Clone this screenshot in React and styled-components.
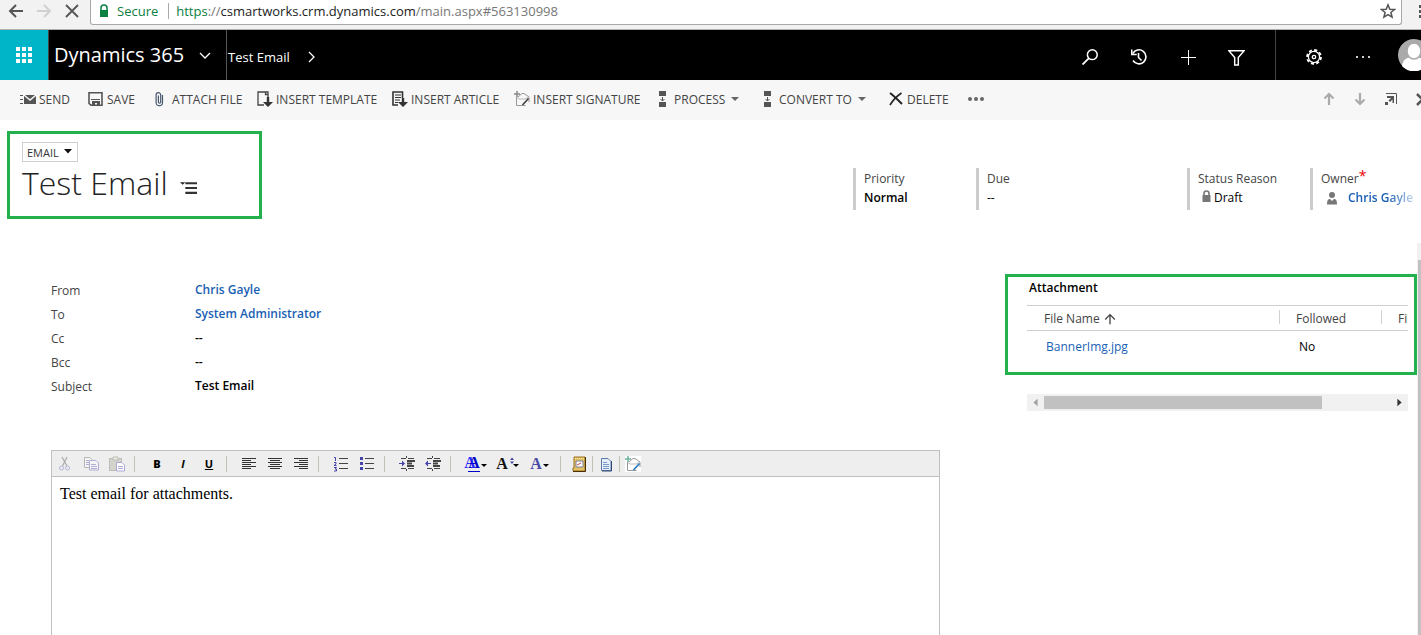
import { useState } from "react";
import styled, { createGlobalStyle, css } from "styled-components";

const commands = [
    { label: "SEND", icon: "send", width: 68 },
    { label: "SAVE", icon: "save", width: 65 },
    { label: "ATTACH FILE", icon: "clip", width: 104 },
    { label: "INSERT TEMPLATE", icon: "template", width: 135 },
    { label: "INSERT ARTICLE", icon: "article", width: 122 },
    { label: "INSERT SIGNATURE", icon: "signature", width: 141 },
    { label: "PROCESS", icon: "process", width: 105, menu: true },
    { label: "CONVERT TO", icon: "process", width: 128, menu: true },
    { label: "DELETE", icon: "remove", width: 80 },
];

const details = [
    { label: "From", value: "Chris Gayle", link: true },
    { label: "To", value: "System Administrator", link: true },
    { label: "Cc", value: "--" },
    { label: "Bcc", value: "--" },
    { label: "Subject", value: "Test Email" },
];

const Icon = ({ name, size = 16 }) => (
    <svg width={size} height={size} viewBox="0 0 16 16" fill="none" aria-hidden="true">
        {icons[name]}
    </svg>
);

const envelopePen = (pen, plus) => (
    <>
        <path d="M2.500 6v8.500h9M4 6l4-3.500h2L15 6v5" stroke="#999" />
        <path d="M3 6.500l2 1.500h6l3-1.500" stroke="#bbb" />
        <path d="M14.500 7.500L8.500 14" stroke={pen} strokeWidth="1.700" />
        <path d="M3 0v6M0 3h6" stroke={plus} strokeWidth="1.500" />
    </>
);

const icons = {
    back: <path d="M15 8H2M8 2L2 8l6 6" stroke="#555" strokeWidth="2" />,
    forward: <path d="M1 8h13M8 2l6 6-6 6" stroke="#d0d0d0" strokeWidth="2" />,
    stop: <path d="M2 2l12 12M14 2L2 14" stroke="#555" strokeWidth="1.800" />,
    lock: (
        <>
            <path d="M5 7V5a3 3 0 0 1 6 0v2" stroke="#0b8043" strokeWidth="1.500" />
            <path d="M4 7h8v7H4z" fill="#0b8043" />
        </>
    ),
    star: <path d="M8 1.800l1.800 4.400 4.700.3-3.600 3 1.200 4.700L8 11.600l-4.100 2.600 1.200-4.700-3.600-3 4.700-.3z" stroke="#555" strokeWidth="1.500" />,
    waffle: <path d="M0 0h4v4H0zM6 0h4v4H6zM12 0h4v4h-4zM0 6h4v4H0zM6 6h4v4H6zM12 6h4v4h-4zM0 12h4v4H0zM6 12h4v4H6zM12 12h4v4h-4z" fill="#fff" />,
    down: <path d="M3 7l5 5 5-5" stroke="#fff" strokeWidth="1.300" />,
    right: <path d="M5 3l5 5-5 5" stroke="#fff" strokeWidth="1.300" />,
    search: (
        <>
            <circle cx="10.300" cy="5.700" r="4.900" stroke="#fff" strokeWidth="1.500" />
            <path d="M7 9.200L.5 15.500" stroke="#fff" strokeWidth="1.800" />
        </>
    ),
    history: (
        <>
            <path d="M1.800 4.500A7 7 0 1 1 2 11.500" stroke="#fff" strokeWidth="1.600" />
            <path d="M.7 .5v5h5M7.500 4v4.500l3 3" stroke="#fff" strokeWidth="1.600" />
        </>
    ),
    plus: <path d="M8.500 1v15M1 8.500h15" stroke="#fff" />,
    filter: <path d="M.8 1.600h14.400L9.700 8v7H6.300V8z" stroke="#fff" strokeWidth="1.400" />,
    gear: (
        <>
            <circle cx="8" cy="8" r="7" stroke="#fff" strokeWidth="1.800" strokeDasharray="3.100 2.400" />
            <circle cx="8" cy="8" r="5.600" stroke="#fff" strokeWidth="1.300" />
            <circle cx="8" cy="8" r="1.700" stroke="#fff" strokeWidth="1.300" />
        </>
    ),
    more: <path d="M1 7h2v2H1zM7 7h2v2H7zM13 7h2v2h-2z" fill="#ccc" />,
    dots: (
        <g fill="#666">
            <circle cx="2" cy="8" r="2" />
            <circle cx="8" cy="8" r="2" />
            <circle cx="14" cy="8" r="2" />
        </g>
    ),
    send: (
        <>
            <path d="M0 4.500h3M0 8.500h3M0 12.500h3" stroke="#555" />
            <path d="M4 4h12v9H4z" fill="#555" />
            <path d="M4 4l6 5 6-5" stroke="#f7f7f7" strokeWidth="1.400" />
        </>
    ),
    save: (
        <>
            <path d="M1 1.800h13v12.400H3L1 12.500z" stroke="#555" strokeWidth="1.600" />
            <path d="M3 8.500h9" stroke="#555" />
            <path d="M4 10h8v5H9v-3H7v3H4z" fill="#555" />
        </>
    ),
    clip: <path d="M9.500 4v7.500a3.200 3.200 0 0 1-6.400 0V4a2.300 2.300 0 0 1 4.600 0v7a1 1 0 0 1-2.300 0V4.500" stroke="#4a5870" strokeWidth="1.200" />,
    template: (
        <>
            <path d="M7 14H1V1h10v5M8.500 1v2.500H11" stroke="#444" strokeWidth="1.300" />
            <path d="M9.800 6h2.400v5H16l-5 5-5-5h3.800z" fill="#333" />
        </>
    ),
    article: (
        <>
            <path d="M6 14H1V1h9.500v6" stroke="#333" strokeWidth="1.600" />
            <path d="M3 4h6M3 6.500h6M3 9h5M3 11.500h3" stroke="#333" />
            <path d="M9.800 7h2.400v4H16l-5 5-5-5h3.800z" fill="#333" />
        </>
    ),
    signature: envelopePen("#444", "#888"),
    process: (
        <>
            <path d="M4 0h7v5H4zM4 11h7v5H4z" fill="#555" />
            <path d="M7.500 6v4M5.500 8l2 2 2-2" stroke="#555" />
        </>
    ),
    remove: (
        <>
            <path d="M2 2c4 3 8 7 12 11" stroke="#222" strokeWidth="2" />
            <path d="M13.500 2C9 5 5 9 2 14" stroke="#222" strokeWidth="1.600" />
        </>
    ),
    caret: <path d="M3 6h8l-4 4z" fill="#666" />,
    up: <path d="M8 14V3M3.500 7.500L8 3l4.500 4.500" stroke="#aaa" strokeWidth="2.200" />,
    downArrow: <path d="M8 2v11M3.500 8.500L8 13l4.500-4.500" stroke="#aaa" strokeWidth="2.200" />,
    popout: (
        <>
            <path d="M3 2.500h10.500V13" stroke="#555" />
            <path d="M4 5h7v7H9.500V8.500L7 11 5.500 9.500 8 7H4zM2 11h3v3H2z" fill="#555" />
        </>
    ),
    close: <path d="M1 3l11 11M12 3L1 14" stroke="#555" strokeWidth="2.500" />,
    formMenu: (
        <>
            <path d="M0 3h5L2.500 5.500z" fill="#222" />
            <path d="M5 4h11M5 8.500h11M5 13h11" stroke="#333" strokeWidth="2" />
        </>
    ),
    padlock: (
        <>
            <path d="M6 5V3.500a2.500 2.500 0 0 1 5 0V5" stroke="#777" strokeWidth="1.600" />
            <path d="M4.500 5h8v7h-8z" fill="#777" />
        </>
    ),
    person: (
        <>
            <circle cx="8" cy="5" r="3" fill="#777" />
            <path d="M3 14.500c0-4 1-5.500 3-5.500l2 2 2-2c2 0 3 1.500 3 5.500z" fill="#777" />
        </>
    ),
    sortUp: <path d="M8 14V3M2.500 8.500L8 3l5.500 5.500" stroke="#444" strokeWidth="1.500" />,
    scrollLeft: <path d="M10 4.500v7L6 8z" fill="#a3a3a3" />,
    scrollRight: <path d="M6 4.500v7L10 8z" fill="#333" />,
    cut: (
        <>
            <path d="M5 1l5 9M10 1L5.500 10" stroke="#aaa" strokeWidth="1.200" />
            <circle cx="4.500" cy="12" r="2" stroke="#b5b5dc" />
            <circle cx="10.500" cy="12" r="2" stroke="#b5b5dc" />
        </>
    ),
    copy: (
        <>
            <path d="M1.500 1.500H7l2 2v8H1.500z" stroke="#b5b5b5" fill="#f5f5f5" />
            <path d="M6.500 4.500H13l2.500 2.500v7h-9z" stroke="#b0b0d5" fill="#f5f5f5" />
            <path d="M3 4.500h3M3 6.500h3M3 8.500h3M8 8.500h5M8 10.500h6M8 12.500h6" stroke="#b0b0d5" />
        </>
    ),
    paste: (
        <>
            <path d="M.5 2.500h12v12H.5z" stroke="#bbb" fill="#d3d3cc" />
            <path d="M4 1h5v3H4z" fill="#eeeee0" stroke="#bbb" />
            <path d="M7.500 6.500H13l2.500 2.500v6h-8z" stroke="#aaaad5" fill="#fff" />
            <path d="M9 10.500h5M9 12.500h5" stroke="#aaaad5" />
        </>
    ),
    alignLeft: <path d="M1 2.500h14M1 4.500h9M1 6.500h14M1 8.500h9M1 10.500h14M1 12.500h9" stroke="#333" />,
    alignCenter: <path d="M1 2.500h14M3 4.500h10M1 6.500h14M3 8.500h10M1 10.500h14M3 12.500h10" stroke="#333" />,
    alignRight: <path d="M1 2.500h14M6 4.500h9M1 6.500h14M6 8.500h9M1 10.500h14M6 12.500h9" stroke="#333" />,
    numbers: (
        <>
            <path d="M6 2.500h9M6 7.500h9M6 12.500h9" stroke="#444" />
            <path d="M1 1.500h1.500V5M1 6.500h2v1.500L1 9.500h2.500M1 11.500h2.500L2 13h1.500v2H1" stroke="#44a" />
        </>
    ),
    bullets: (
        <>
            <path d="M6 2.500h9M6 7.500h9M6 12.500h9" stroke="#444" />
            <path d="M1 1h3v3H1zM1 6h3v3H1zM1 11h3v3H1z" fill="#44a" />
        </>
    ),
    indent: (
        <>
            <path d="M2 2.500h5M9 2.500h6M2 12.500h5M9 12.500h6M7.500 0v2M7.500 13v2" stroke="#444" />
            <path d="M8 5h8M8 7.500h5M8 10h7" stroke="#444" strokeWidth="2" />
            <path d="M0 7h3V4.500L6 7.500l-3 3V8H0z" fill="#44a" />
        </>
    ),
    outdent: (
        <>
            <path d="M2 2.500h5M9 2.500h6M2 12.500h5M9 12.500h6M7.500 0v2M7.500 13v2" stroke="#444" />
            <path d="M8 5h8M8 7.500h5M8 10h7" stroke="#444" strokeWidth="2" />
            <path d="M6 7H3V4.500L0 7.500l3 3V8h3z" fill="#44a" />
        </>
    ),
    pickerCaret: <path d="M3 5h8L7 9.500z" fill="#111" />,
    smallCaret: <path d="M5 8h6l-3 3z" fill="#000" />,
    sizer: <path d="M6 4h4L8 1.500zM6 5.500h4L8 8z" fill="#44a" />,
    book: (
        <>
            <path d="M3 1h11v14H2v-3h1z" fill="#e3c065" stroke="#9a7020" />
            <path d="M14.500 1v14.500H2" stroke="#4a3000" />
            <path d="M5 5h7v6H5z" fill="#fff" stroke="#77829a" />
            <path d="M6 9l4-2" stroke="#c44" />
            <path d="M4 2.500h9" stroke="#fff3b0" strokeDasharray="1 1" />
        </>
    ),
    page: (
        <>
            <path d="M3.500 2.500H10l3 3v9H3.500z" fill="#e6eefb" stroke="#5a78a8" />
            <path d="M5 6.500h4M5 8.500h6M5 10.500h6M5 12.500h6" stroke="#7a98c8" />
            <path d="M13.500 5v10H4" stroke="#334a70" />
        </>
    ),
    signatureColor: (
        <>
            <path d="M0 0h16v16H0z" fill="#fff" />
            {envelopePen("#2a78c0", "#6fb59a")}
        </>
    ),
};

const BrowserBar = () => (
    <Chrome>
        <ChromeButton aria-label="Back"><Icon name="back" /></ChromeButton>
        <ChromeButton aria-label="Forward"><Icon name="forward" /></ChromeButton>
        <ChromeButton aria-label="Stop"><Icon name="stop" /></ChromeButton>
        <AddressBar>
            <Icon name="lock" />
            <Secure>Secure</Secure>
            <Url role="textbox" aria-label="Address">
                <em>https</em>://<strong>csmartworks.crm.dynamics.com</strong>/main.aspx#563130998
            </Url>
            <Icon name="star" />
        </AddressBar>
        <BrowserMenu aria-label="Browser menu"><i /><i /><i /></BrowserMenu>
    </Chrome>
);

const TopNav = () => (
    <Nav>
        <Waffle aria-label="Apps"><Icon name="waffle" /></Waffle>
        <Brand>
            Dynamics 365
            <Icon name="down" />
        </Brand>
        <Crumb href="#record">
            Test Email
            <Icon name="right" />
        </Crumb>
        <NavTools>
            <NavButton aria-label="Search"><Icon name="search" /></NavButton>
            <NavButton aria-label="Recent"><Icon name="history" /></NavButton>
            <NavButton aria-label="New"><Icon name="plus" /></NavButton>
            <NavButton aria-label="Advanced find"><Icon name="filter" size={17} /></NavButton>
        </NavTools>
        <NavSettings>
            <NavButton aria-label="Settings"><Icon name="gear" /></NavButton>
            <NavButton aria-label="More"><Icon name="more" /></NavButton>
        </NavSettings>
        <Avatar>
            <svg width="32" height="32" viewBox="0 0 32 32" aria-hidden="true">
                <circle cx="16" cy="16" r="16" fill="#aaa" />
                <path d="M4 27c1-7 5-9 12-9s11 2 12 9a16 16 0 0 1-24 0z" fill="#fff" />
                <ellipse cx="16" cy="12" rx="7" ry="8" fill="#fff" stroke="#aaa" strokeWidth="1.500" />
            </svg>
        </Avatar>
    </Nav>
);

const CommandBar = () => (
    <Commands>
        {commands.map(({ label, icon, width, menu }) => (
            <Command key={label} $width={width}>
                <Icon name={icon} />
                <span>{label}</span>
                {menu && <Icon name="caret" />}
            </Command>
        ))}
        <Command aria-label="More commands"><Icon name="dots" /></Command>
        <RecordTools>
            <RecordButton aria-label="Previous record"><Icon name="up" /></RecordButton>
            <RecordButton aria-label="Next record"><Icon name="downArrow" /></RecordButton>
            <RecordButton aria-label="Pop out"><Icon name="popout" /></RecordButton>
            <CloseButton aria-label="Close"><Icon name="close" /></CloseButton>
        </RecordTools>
    </Commands>
);

const FormHeader = () => (
    <HeaderRow>
        <TitleBox>
            <FormPicker>
                <select aria-label="Form">
                    <option>EMAIL</option>
                </select>
                <Icon name="pickerCaret" />
            </FormPicker>
            <TitleLine>
                <Title>Test Email</Title>
                <SectionsButton aria-label="Form sections"><Icon name="formMenu" size={17} /></SectionsButton>
            </TitleLine>
        </TitleBox>
        <HeaderFields>
            <Field $width={123}>
                <dt>Priority</dt>
                <dd><b>Normal</b></dd>
            </Field>
            <Field $width={211}>
                <dt>Due</dt>
                <dd>--</dd>
            </Field>
            <Field $width={123}>
                <dt>Status Reason</dt>
                <Locked><Icon name="padlock" />Draft</Locked>
            </Field>
            <Field $width={111}>
                <dt>Owner<Required>*</Required></dt>
                <Owner>
                    <Icon name="person" />
                    <a href="#owner">Chris Gayle</a>
                </Owner>
            </Field>
        </HeaderFields>
    </HeaderRow>
);

const Attachments = () => (
    <Side>
        <AttachmentBox>
            <h2>Attachment</h2>
            <TableClip>
                <Table>
                    <thead>
                        <tr>
                            <th>File Name <Icon name="sortUp" size={14} /></th>
                            <th>Followed</th>
                            <th>File Size</th>
                        </tr>
                    </thead>
                    <tbody>
                        <tr>
                            <td><a href="#file">BannerImg.jpg</a></td>
                            <td>No</td>
                            <td />
                        </tr>
                    </tbody>
                </Table>
            </TableClip>
        </AttachmentBox>
        <Scroller>
            <PlainButton aria-label="Scroll left"><Icon name="scrollLeft" size={17} /></PlainButton>
            <ScrollTrack><ScrollThumb /></ScrollTrack>
            <PlainButton aria-label="Scroll right"><Icon name="scrollRight" size={17} /></PlainButton>
        </Scroller>
    </Side>
);

const Tool = ({ icon, label }) => (
    <ToolButton aria-label={label}><Icon name={icon} /></ToolButton>
);

const Editor = () => {
    const [text, setText] = useState("Test email for attachments.");

    return (
        <EditorFrame>
            <EditorBar>
                <Tool icon="cut" label="Cut" />
                <Tool icon="copy" label="Copy" />
                <Tool icon="paste" label="Paste" />
                <Divider />
                <ToolButton><b>B</b></ToolButton>
                <ToolButton><i>I</i></ToolButton>
                <ToolButton><u>U</u></ToolButton>
                <Divider />
                <Tool icon="alignLeft" label="Align left" />
                <Tool icon="alignCenter" label="Align center" />
                <Tool icon="alignRight" label="Align right" />
                <Divider />
                <Tool icon="numbers" label="Numbered list" />
                <Tool icon="bullets" label="Bulleted list" />
                <Divider />
                <Tool icon="indent" label="Increase indent" />
                <Tool icon="outdent" label="Decrease indent" />
                <Divider />
                <FontButton $color="#0000c8" $double aria-label="Font">
                    <span>A</span>
                    <Icon name="smallCaret" />
                </FontButton>
                <FontButton $color="#111" aria-label="Font size">
                    <span>A</span>
                    <Icon name="sizer" />
                    <Icon name="smallCaret" />
                </FontButton>
                <FontButton $color="#4a4aa5" aria-label="Font color">
                    <span>A</span>
                    <Icon name="smallCaret" />
                </FontButton>
                <Divider $short />
                <Tool icon="book" label="Insert template" />
                <Divider $tight />
                <Tool icon="page" label="Insert article" />
                <Divider $tight />
                <Tool icon="signatureColor" label="Insert signature" />
            </EditorBar>
            <Message
                aria-label="Message"
                spellCheck={false}
                value={text}
                onChange={(e) => setText(e.target.value)}
            />
        </EditorFrame>
    );
};

const App = () => (
    <Page>
        <GlobalStyle />
        <BrowserBar />
        <TopNav />
        <CommandBar />
        <FormHeader />
        <Body>
            <Main>
                <Details>
                    {details.map(({ label, value, link }) => (
                        <DetailRow key={label}>
                            <dt>{label}</dt>
                            <dd>{link ? <a href="#contact">{value}</a> : value}</dd>
                        </DetailRow>
                    ))}
                </Details>
                <Editor />
            </Main>
            <Attachments />
            <PageScroll><div /></PageScroll>
        </Body>
    </Page>
);

const GlobalStyle = createGlobalStyle`
    * {
        box-sizing: border-box;
    }
    body {
        margin: 0;
        background: #fff;
        color: #000;
        font-family: "Open Sans", "Noto Sans", sans-serif;
        font-size: 12px;
    }
    button {
        background: none;
        border: 0;
        padding: 0;
        font: inherit;
        color: inherit;
    }
    a {
        color: #1a5fb4;
        text-decoration: none;
    }
    dl, dd, h1, h2 {
        margin: 0;
    }
    svg {
        display: block;
        flex: none;
    }
`;

const highlight = css`
    border: 3px solid #22b14c;
`;

const Page = styled.div`
    display: flex;
    flex-direction: column;
    height: 100vh;
    overflow: hidden;
`;

const PlainButton = styled.button`
    display: flex;
    align-items: center;
    justify-content: center;
`;

const Chrome = styled.div`
    display: flex;
    align-items: flex-start;
    flex: none;
    height: 30px;
    padding-left: 2px;
    background: #f2f2f2;
    border-bottom: 1px solid #b0b0b0;
`;
const ChromeButton = styled(PlainButton)`
    width: 28px;
    height: 22px;
`;
const AddressBar = styled.div`
    display: flex;
    align-items: center;
    flex: 1;
    height: 25px;
    margin-left: 4px;
    padding: 0 5px 2px;
    background: #fff;
    border: 1px solid #a8a8a8;
    border-top: 0;
    border-radius: 0 0 3px 3px;
    font-size: 13px;
`;
const Secure = styled.span`
    margin-left: 5px;
    padding-right: 10px;
    border-right: 1px solid #aaa;
    color: #0b8043;
    line-height: 16px;
`;
const Url = styled.div`
    flex: 1;
    padding-left: 7px;
    color: #777;
    white-space: nowrap;

    em {
        font-style: normal;
        color: #0b8043;
    }
    strong {
        font-weight: 400;
        color: #222;
    }
`;
const BrowserMenu = styled.button`
    display: flex;
    flex-direction: column;
    gap: 2px;
    width: 19px;
    padding: 5px 0 0 17px;

    i {
        width: 3px;
        height: 3px;
        background: #555;
    }
`;

const Nav = styled.nav`
    display: flex;
    flex: none;
    height: 50px;
    background: #000;
    color: #fff;
`;
const Waffle = styled(PlainButton)`
    width: 48px;
    background: #00b5c8;
`;
const Brand = styled(PlainButton)`
    justify-content: space-between;
    width: 179px;
    padding: 0 13px 2px 5px;
    border-left: 1px solid #444;
    border-right: 1px solid #555;
    font-size: 20px;
    white-space: nowrap;
`;
const Crumb = styled.a`
    display: flex;
    align-items: center;
    gap: 14px;
    color: #fff;
    font-size: 13px;
    padding: 3px 0 0 1px;
`;
const NavTools = styled.div`
    display: flex;
    margin-left: auto;
    padding: 4px 14px 0 0;
    border-right: 1px solid #444;
`;
const NavSettings = styled.div`
    display: flex;
    padding: 4px 11px 0 13px;
`;
const NavButton = styled(PlainButton)`
    width: 49px;
`;
const Avatar = styled.div`
    width: 23px;
    padding-top: 9px;
    overflow: hidden;
`;

const Commands = styled.div`
    display: flex;
    align-items: center;
    flex: none;
    height: 40px;
    padding: 0 0 2px 20px;
    background: #f7f7f7;
    color: #444;
`;
const Command = styled.button`
    display: flex;
    align-items: center;
    gap: 3px;
    flex: none;
    width: ${({ $width }) => ($width ? `${$width}px` : "auto")};
    white-space: nowrap;
`;
const RecordTools = styled.div`
    display: flex;
    margin-left: auto;
`;
const RecordButton = styled(PlainButton)`
    width: 31px;
`;
const CloseButton = styled(PlainButton)`
    justify-content: flex-start;
    width: 15px;
    padding-left: 10px;
    overflow: hidden;
`;

const HeaderRow = styled.header`
    display: flex;
    justify-content: space-between;
    align-items: flex-start;
    flex: none;
    padding: 11px 0 24px 7px;
`;
const TitleBox = styled.div`
    ${highlight}
    width: 255px;
    height: 88px;
    padding: 8px 12px;
`;
const FormPicker = styled.div`
    display: flex;
    align-items: center;
    width: 56px;
    height: 20px;
    border: 1px solid #d0d0d0;

    select {
        appearance: none;
        flex: 1;
        min-width: 0;
        padding: 0 0 0 4px;
        border: 0;
        background: none;
        font-family: inherit;
        font-size: 11px;
        color: #333;
    }
`;
const TitleLine = styled.div`
    display: flex;
    align-items: center;
    gap: 12px;
    height: 42px;
`;
const Title = styled.h1`
    font-size: 32px;
    font-weight: 300;
    line-height: 42px;
    color: #222;
    white-space: nowrap;
`;
const SectionsButton = styled(PlainButton)`
    padding-top: 8px;
`;
const HeaderFields = styled.dl`
    display: flex;
    padding-top: 37px;
`;
const Field = styled.div`
    width: ${({ $width }) => $width}px;
    height: 42px;
    padding: 1px 0 0 8px;
    border-left: 3px solid #ccc;
    line-height: 19px;
    white-space: nowrap;

    dt {
        color: #444;
    }
    b {
        font-weight: 600;
    }
`;
const Locked = styled.dd`
    display: flex;
    align-items: center;
`;
const Required = styled.sup`
    color: #e00;
    font-size: 14px;
    line-height: 0;
    vertical-align: 2px;
`;
const Owner = styled.dd`
    display: flex;
    align-items: center;
    gap: 8px;
    padding-left: 3px;
    font-weight: 600;

    a {
        mask-image: linear-gradient(90deg, #000 60%, transparent 115%);
    }
`;

const Body = styled.div`
    display: flex;
    flex: 1;
    min-height: 0;
`;
const Main = styled.main`
    display: flex;
    flex-direction: column;
    flex: 1;
    padding: 35px 65px 0 51px;
`;
const Details = styled.dl`
    margin-bottom: 52px;
`;
const DetailRow = styled.div`
    display: grid;
    grid-template-columns: 144px 1fr;
    height: 24px;
    line-height: 24px;

    dt {
        padding-top: 1px;
        color: #444;
    }
    dd {
        font-weight: 600;
    }
`;

const EditorFrame = styled.div`
    display: flex;
    flex-direction: column;
    flex: 1;
    border: 1px solid #c0c0c0;
    border-bottom: 0;
`;
const EditorBar = styled.div`
    display: flex;
    align-items: center;
    height: 26px;
    background: #eee;
    border-bottom: 1px solid #c0c0c0;
`;
const Divider = styled.span`
    width: 1px;
    height: 16px;
    margin: ${({ $tight, $short }) => ($tight ? "0" : $short ? "0 5px 0 4px" : "0 9px 0 4px")};
    background: #c4c2b4;
`;
const ToolButton = styled(PlainButton)`
    width: 26px;
    height: 24px;
    color: #000;
    font-size: 11px;
    font-weight: 700;
`;
const FontButton = styled(PlainButton)`
    width: 32px;
    color: ${({ $color }) => $color};
    font-family: "Liberation Serif", serif;
    font-size: 16px;
    font-weight: 700;
    line-height: 16px;

    span {
        ${({ $double }) =>
            $double &&
            css`
                margin-left: 4px;
                border-bottom: 1px solid;
                text-shadow: -4px 0 #2a2aff;
            `}
    }
    svg {
        margin: 0 -4px;
    }
    svg + svg {
        margin-left: -8px;
    }
`;
const Message = styled.textarea`
    flex: 1;
    padding: 8px;
    border: 0;
    outline: 0;
    resize: none;
    font-family: "Liberation Serif", serif;
    font-size: 16px;
    line-height: 18px;
`;

const Side = styled.aside`
    flex: none;
    width: 412px;
    padding-top: 31px;
`;
const AttachmentBox = styled.section`
    ${highlight}
    height: 101px;
    padding: 0 6px 0 19px;

    h2 {
        padding-left: 2px;
        font-size: 12px;
        font-weight: 600;
        line-height: 22px;
    }
`;
const TableClip = styled.div`
    margin-top: 6px;
    overflow: hidden;
`;
const Table = styled.table`
    table-layout: fixed;
    width: 480px;
    border-collapse: collapse;

    th {
        height: 25px;
        padding: 0 0 0 16px;
        border-top: 1px solid #d0d0d0;
        border-bottom: 1px solid #d0d0d0;
        background: linear-gradient(#d0d0d0, #d0d0d0) right 4px / 1px 14px no-repeat;
        color: #444;
        font-weight: 400;
        text-align: left;
    }
    th:first-child {
        width: 253px;
        padding-left: 17px;
    }
    th:nth-child(2) {
        width: 102px;
    }
    th svg {
        display: inline-block;
        vertical-align: -3px;
    }
    td {
        height: 31px;
        padding: 0 0 0 19px;
    }
`;
const Scroller = styled.div`
    display: flex;
    height: 17px;
    margin: 19px 9px 0 22px;
    background: #f1f1f1;
`;
const ScrollTrack = styled.div`
    flex: 1;
    padding: 2px 0;
`;
const ScrollThumb = styled.div`
    width: 80%;
    height: 13px;
    background: #c1c1c1;
`;
const PageScroll = styled.div`
    width: 4px;
    padding: 17px 0 0 1px;
    background: #f1f1f1;

    div {
        height: 100%;
        background: #c1c1c1;
    }
`;

export default App;
